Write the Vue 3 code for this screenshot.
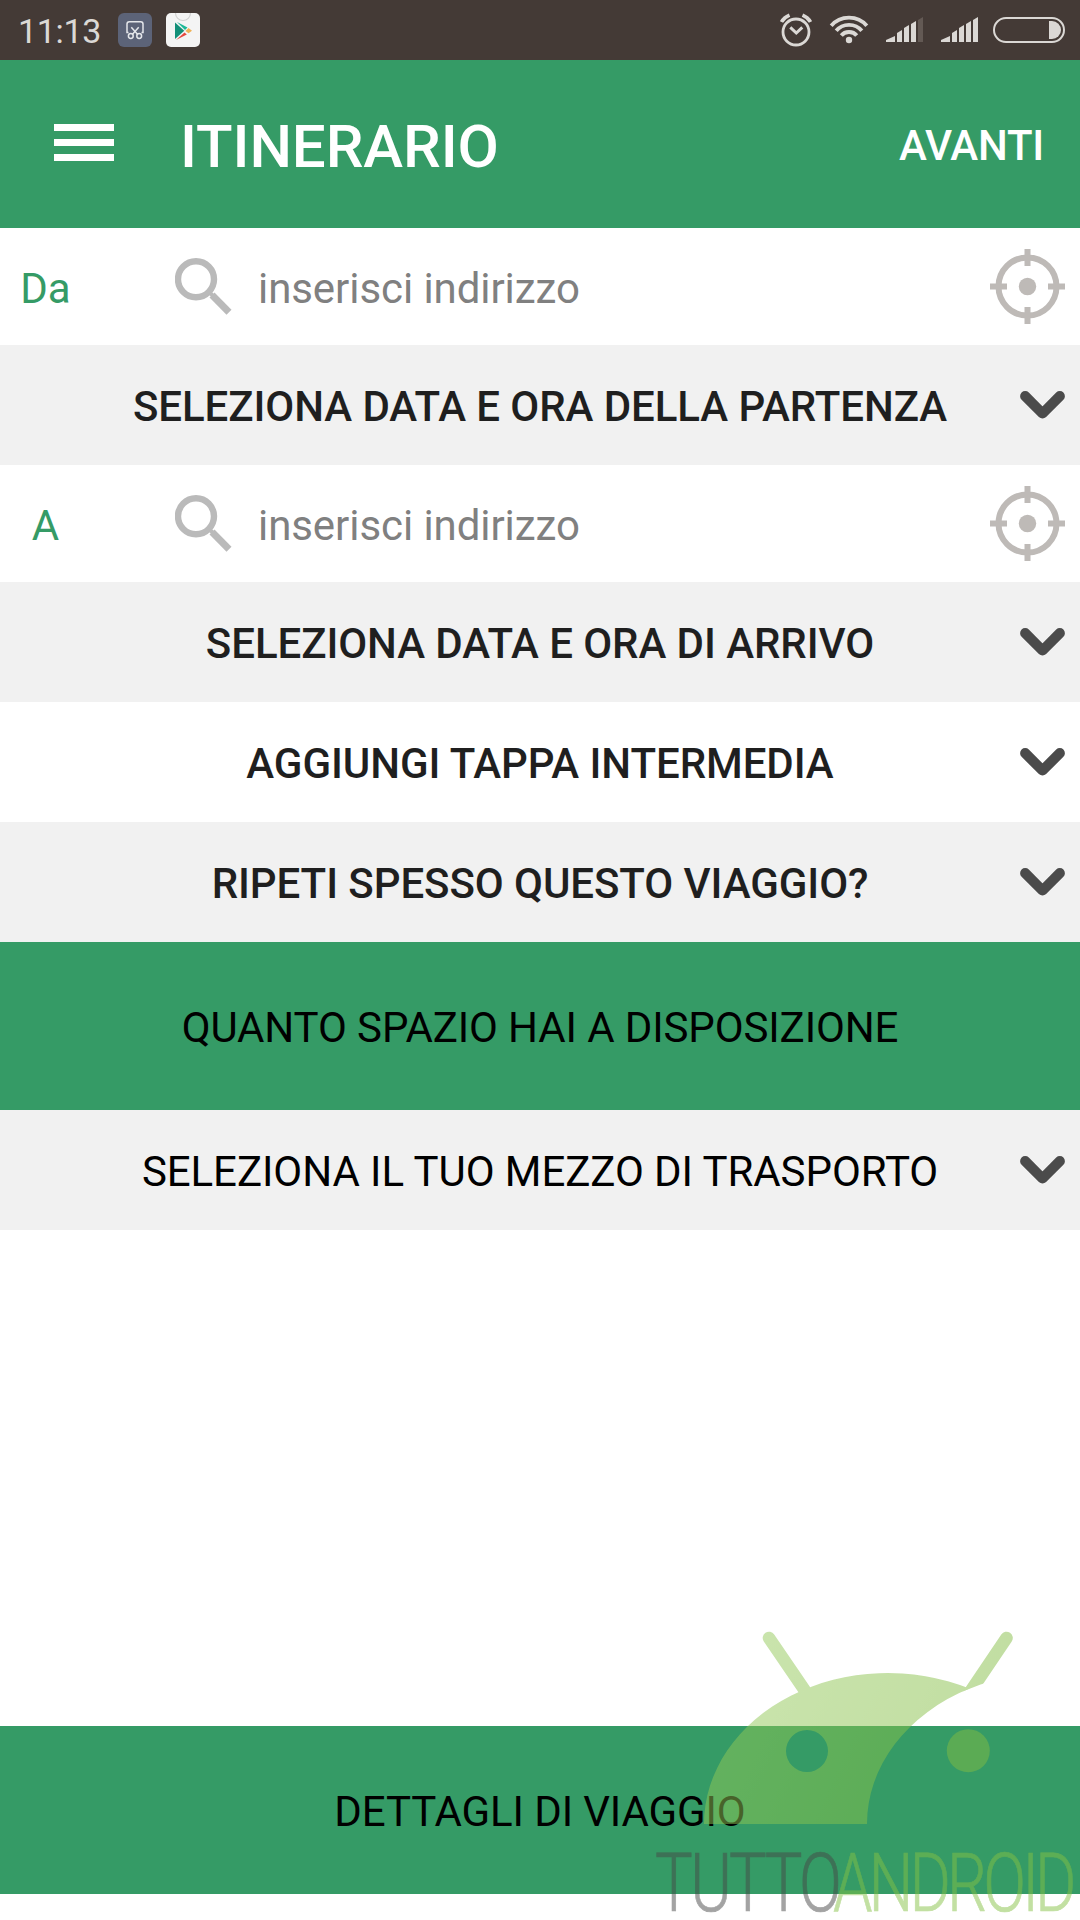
<template>
  <div class="screen">
    <div class="status-bar">
      <span class="clock">11:13</span>
      <svg class="app-icon" width="34" height="34" viewBox="0 0 34 34">
        <rect width="34" height="34" rx="6" fill="#5c6378" />
        <g fill="none" stroke="#e4e6ea" stroke-width="1.5">
          <path d="M10.500 19.500H9V11q0-2.300 2.300-2.300h11.400q2.300 0 2.300 2.300v8.500h-1.500" />
          <path d="M13.300 14.300l6.200 7M20.700 14.300l-6.200 7" />
          <circle cx="12.800" cy="23" r="2.400" />
          <circle cx="21.200" cy="23" r="2.400" />
        </g>
      </svg>
      <svg class="app-icon" width="34" height="34" viewBox="0 0 34 34">
        <rect width="34" height="34" rx="5" fill="#f4f4f4" />
        <path d="M9.500 0a7.500 7.500 0 0 0 15 0" fill="none" stroke="#d2d2d2" stroke-width="1.200" />
        <path d="M9 9.500v16.500l9.300-8.300z" fill="#138f78" />
        <path d="M11 9l10.500 5.500-2.500 2.600z" fill="#1cb896" />
        <path d="M10 27l8.500-7.600 2.300 2z" fill="#e5483f" />
        <path d="M19.500 18l3-3 3.500 2.800-3.500 2.400z" fill="#efb155" />
      </svg>

      <div class="status-right">
        <svg width="32" height="34" viewBox="0 0 32 34" fill="none" stroke="#dbd8d5">
          <circle cx="16" cy="19" r="13" stroke-width="2.800" />
          <path d="M1.500 9Q4 4.500 9.500 2.200M30.500 9Q28 4.500 22.500 2.200" stroke-width="3.600" />
          <path d="M10.300 14.300l6 5.700 6-5.700" stroke-width="3" />
        </svg>
        <svg class="wifi" width="40" height="30" viewBox="0 0 40 30" fill="none" stroke="#dbd8d5" stroke-width="3.800">
          <path d="M2.200 10.800Q9 2.600 20 2.600t17.800 8.200" />
          <path d="M7.200 15.800Q12 9.800 20 9.800t12.800 6" />
          <path d="M12.300 20.500Q15 17 20 17t7.700 3.500" />
          <circle cx="20" cy="25" r="3.200" fill="#dbd8d5" stroke="none" />
        </svg>
        <svg v-for="sim in sims" :key="sim.id" class="signal" width="38" height="26" viewBox="0 0 38 26">
          <path
            v-for="(bar, i) in bars"
            :key="i"
            :d="bar"
            :fill="i < sim.level ? '#dbd8d5' : '#635954'"
          />
        </svg>
        <svg class="battery" width="72" height="26" viewBox="0 0 72 26">
          <rect x="1" y="1" width="70" height="24" rx="12" fill="none" stroke="#dbd8d5" stroke-width="2" />
          <path d="M56 4h3a9 9 0 0 1 0 18h-3z" fill="#dbd8d5" />
        </svg>
      </div>
    </div>

    <header class="toolbar">
      <div class="menu-btn"><i></i><i></i><i></i></div>
      <h1>ITINERARIO</h1>
      <span class="next">AVANTI</span>
    </header>

    <template v-for="row in rows" :key="row.text + row.label">
      <div v-if="row.type === 'address'" class="address">
        <span class="label">{{ row.label }}</span>
        <svg class="search" width="57" height="58" viewBox="0 0 57 58" fill="none" stroke="#bababa">
          <circle cx="21" cy="21.300" r="18" stroke-width="6.400" />
          <path d="M35 34.800l2.500 2.500" stroke-width="4" />
          <path d="M37 37l17 17.300" stroke-width="7" />
        </svg>
        <span class="placeholder">{{ row.text }}</span>
        <svg class="locate" width="75" height="75" viewBox="0 0 75 75" fill="none" stroke="#bebab7" stroke-width="6">
          <circle cx="37.500" cy="37.500" r="29" />
          <path d="M37.500 0v17M37.500 58v17M0 37.500h17M58 37.500h17" />
          <circle cx="37.500" cy="37.500" r="8.700" fill="#bebab7" stroke="none" />
        </svg>
      </div>
      <div v-else class="option" :class="{ grey: row.grey, light: row.light }">
        <span>{{ row.text }}</span>
        <svg class="chevron" width="45" height="28" viewBox="0 0 45 28">
          <path d="M5.200 5.200l17.300 17.300 17.300-17.300" fill="none" stroke="#4b4b4b" stroke-width="10.200" stroke-linecap="round" stroke-linejoin="round" />
        </svg>
      </div>
      <div v-if="row.space" class="banner">QUANTO SPAZIO HAI A DISPOSIZIONE</div>
    </template>

    <div class="banner bottom">DETTAGLI DI VIAGGIO</div>

    <!-- watermark -->
    <svg class="watermark" width="440" height="320" viewBox="640 1600 440 320">
      <defs>
        <linearGradient id="droid" gradientUnits="userSpaceOnUse" x1="720" y1="1680" x2="980" y2="1800">
          <stop offset="0" stop-color="#94c95a" />
          <stop offset="1" stop-color="#82bb42" />
        </linearGradient>
        <clipPath id="cut">
          <path clip-rule="evenodd" d="M640 1600h700v400H640zM867 1824a184 151 0 1 0 368 0a184 151 0 1 0 -368 0z" />
        </clipPath>
      </defs>
      <g opacity="0.5">
        <path
          fill="url(#droid)"
          fill-rule="evenodd"
          d="M704 1824A184 151 0 0 1 969.500 1688.600A184 151 0 0 0 867 1824zM786 1751a21 21 0 1 0 42 0a21 21 0 1 0 -42 0z"
        />
        <path d="M769 1638l35.500 52" stroke="url(#droid)" stroke-width="12.600" stroke-linecap="round" />
        <path d="M1006.500 1638L964 1701" stroke="url(#droid)" stroke-width="12.600" stroke-linecap="round" clip-path="url(#cut)" />
        <circle cx="968.300" cy="1750.700" r="21.500" fill="#82bb42" />
        <text class="brand tutto" transform="translate(655 1911) scale(.78 1)">TUTTO</text>
        <text class="brand android" transform="translate(833 1911) scale(.78 1)">ANDROID</text>
      </g>
    </svg>
  </div>
</template>

<script setup>
const sims = [
  { id: 1, level: 4 },
  { id: 2, level: 5 },
]

const bars = [
  'M0 25v-2l9-4v6z',
  'M11 25v-9l5-3v12z',
  'M18 25V11l5-3v17z',
  'M25 25V7l5-3v21z',
  'M32 25V3l5-3v25z',
]

const rows = [
  { type: 'address', label: 'Da', text: 'inserisci indirizzo' },
  { text: 'SELEZIONA DATA E ORA DELLA PARTENZA', grey: true },
  { type: 'address', label: 'A', text: 'inserisci indirizzo' },
  { text: 'SELEZIONA DATA E ORA DI ARRIVO', grey: true },
  { text: 'AGGIUNGI TAPPA INTERMEDIA' },
  { text: 'RIPETI SPESSO QUESTO VIAGGIO?', grey: true, space: true },
  { text: 'SELEZIONA IL TUO MEZZO DI TRASPORTO', grey: true, light: true },
]
</script>

<style>
body {
  margin: 0;
  background: #fff;
}
</style>

<style scoped>
.screen {
  position: relative;
  display: flex;
  flex-direction: column;
  width: 1080px;
  height: 1920px;
  overflow: hidden;
  background: #fff;
  font-family: Roboto, sans-serif;
  font-size: 42px;
  letter-spacing: -0.07px;
  white-space: nowrap;
}
.status-bar {
  display: flex;
  align-items: center;
  height: 60px;
  flex: none;
  box-sizing: border-box;
  padding: 0 15px 0 18px;
  background: #443a36;
  color: #dbd8d5;
}
.clock {
  width: 100px;
  font-size: 34px;
  letter-spacing: -0.3px;
  line-height: 60px;
  padding-top: 2px;
}
.app-icon {
  margin-right: 14px;
}
.status-right {
  display: flex;
  align-items: center;
  margin-left: auto;
}
.wifi {
  margin-left: 17px;
}
.signal {
  margin-left: 17px;
}
.battery {
  margin-left: 14px;
}
.toolbar {
  display: flex;
  align-items: center;
  flex: none;
  height: 168px;
  box-sizing: border-box;
  padding: 0 36px 0 54px;
  background: #359b66;
  color: #fff;
}
.menu-btn {
  display: flex;
  flex-direction: column;
  gap: 8px;
  width: 60px;
  margin-right: 66px;
  padding-bottom: 3px;
}
.menu-btn i {
  height: 7px;
  background: #fff;
}
h1 {
  margin: 0;
  font-size: 60px;
  font-weight: 500;
  letter-spacing: -0.1px;
  padding-top: 5px;
}
.next {
  margin-left: auto;
  font-weight: 500;
  letter-spacing: -0.2px;
  padding-top: 2px;
}
.address {
  display: flex;
  align-items: center;
  flex: none;
  height: 117px;
  box-sizing: border-box;
  padding-right: 15px;
}
.label {
  width: 91px;
  margin-right: 84px;
  text-align: center;
  color: #359b66;
  padding-top: 4px;
}
.placeholder {
  margin-left: 26px;
  color: #808080;
  padding-top: 4px;
}
.locate {
  margin-left: auto;
}
.option {
  display: grid;
  grid-template-columns: 60px 1fr 60px;
  align-items: center;
  flex: none;
  height: 120px;
  color: #1f1f1f;
  font-weight: 500;
}
.option span {
  grid-column: 2;
  text-align: center;
  padding-top: 2px;
}
.grey {
  background: #f1f1f1;
}
.light {
  color: #000;
  font-weight: 400;
}
.banner {
  flex: none;
  height: 168px;
  line-height: 172px;
  letter-spacing: -0.12px;
  text-align: center;
  background: #359b66;
  color: #000;
}
.bottom {
  margin-top: auto;
  margin-bottom: 26px;
}
.watermark {
  position: absolute;
  right: 0;
  bottom: 0;
}
.brand {
  font-size: 81px;
  font-weight: 300;
  stroke-width: 0.7;
}
.tutto {
  fill: #474747;
  stroke: #474747;
  letter-spacing: -3.3px;
}
.android {
  fill: #85c045;
  stroke: #85c045;
  letter-spacing: -5px;
}
</style>
